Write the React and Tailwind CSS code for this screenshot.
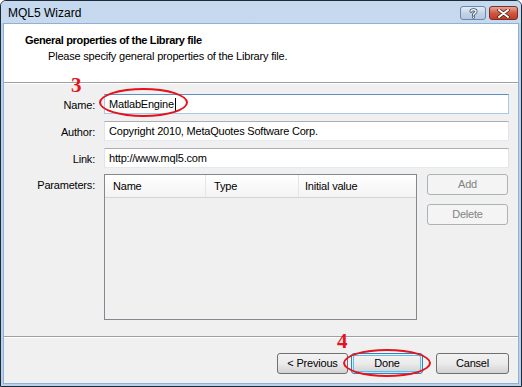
export default function App() {
  const font = { fontFamily: '"Liberation Sans", Arial, sans-serif' };
  return (
    <div className="relative w-[522px] h-[387px] overflow-hidden bg-white tracking-[-0.2px]" style={font}>
      <div className="w-[522px] h-[387px] flex flex-col bg-[#b9d1ea] border border-[#1e2a36] rounded-t-[6px]">
        {/* Title bar */}
        <div className="h-[22px] shrink-0 flex items-center justify-between pl-[7px] pr-[3px] bg-gradient-to-b from-[#c4d8ee] to-[#c6d9ef] rounded-t-[5px]">
          <span className="text-[12px] text-black leading-none pt-[2px] tracking-normal">MQL5 Wizard</span>
          <div className="flex items-start gap-[3px] self-start pt-[5px]">
            <div className="w-[26px] h-[14px] rounded-[3px] border border-[#6d87a7] bg-gradient-to-b from-[#e4edf7] via-[#c3d4e8] to-[#b4c8e0] flex items-center justify-center">
              <svg width="9" height="11" viewBox="0 0 9 11">
                <path d="M2 3.2 C2 1.2 7 1.2 7 3.4 C7 5.2 4.5 5 4.5 7" fill="none" stroke="#3a4d66" strokeWidth="3" strokeLinecap="round" />
                <circle cx="4.5" cy="9.3" r="1.4" fill="#3a4d66" />
                <path d="M2 3.2 C2 1.2 7 1.2 7 3.4 C7 5.2 4.5 5 4.5 7" fill="none" stroke="#ffffff" strokeWidth="1.4" strokeLinecap="round" />
                <circle cx="4.5" cy="9.3" r="0.8" fill="#ffffff" />
              </svg>
            </div>
            <div className="w-[29px] h-[14px] rounded-[3px] border border-[#7a2e24] bg-gradient-to-b from-[#e8a493] via-[#d0583f] to-[#c33c22] flex items-center justify-center">
              <svg width="13" height="9" viewBox="0 0 13 9">
                <path d="M2 1 L11 8 M11 1 L2 8" stroke="#3b1b15" strokeWidth="3.4" strokeLinecap="round" />
                <path d="M2 1 L11 8 M11 1 L2 8" stroke="#ffffff" strokeWidth="2" strokeLinecap="round" />
              </svg>
            </div>
          </div>
        </div>
        {/* Client area */}
        <div className="flex-1 flex flex-col mx-[2px] mb-[2px] border border-[#8fb1d6] bg-[#f0f0f0]">
          {/* Header */}
          <div className="h-[58px] shrink-0 bg-white pt-[10px] pl-[21px] flex flex-col">
            <div className="text-[11px] font-bold text-black leading-[13px] tracking-[-0.35px]">General properties of the Library file</div>
            <div className="text-[11px] text-black leading-[13px] mt-[3px] pl-[23px]">Please specify general properties of the Library file.</div>
          </div>
          <div className="h-px bg-[#a0a0a0] shrink-0" />
          <div className="h-px bg-white shrink-0" />
          {/* Form */}
          <div className="flex-1 flex flex-col pt-[10px] pl-[100px] pr-[9px]">
            <div className="flex flex-col gap-[7px]">
              <Row label="Name:">
                <div className="h-[20px] flex-1 border border-[#a8c8e4] border-t-[#5d8fc0] bg-white flex items-center pl-[4px] text-[11px] text-black">
                  MatlabEngine<span className="w-px h-[13px] bg-black ml-px" />
                </div>
              </Row>
              <Row label="Author:">
                <Input>Copyright 2010, MetaQuotes Software Corp.</Input>
              </Row>
              <Row label="Link:">
                <Input>http://www.mql5.com</Input>
              </Row>
            </div>
            <div className="flex mt-[6px]">
              <div className="w-0 relative">
                <span className="absolute right-[9px] top-[3px] text-[11px] text-black whitespace-nowrap">Parameters:</span>
              </div>
              <div className="w-[313px] h-[146px] border border-[#828790] bg-[#f0f0f0] flex flex-col">
                <div className="h-[23px] flex bg-gradient-to-b from-white to-[#f3f3f3] border-b border-[#d5d5d5] text-[11px] text-black">
                  <div className="w-[101px] border-r border-[#e3e5e7] flex items-center pl-[8px]">Name</div>
                  <div className="w-[93px] border-r border-[#e3e5e7] flex items-center pl-[8px]">Type</div>
                  <div className="flex-1 flex items-center pl-[6px]">Initial value</div>
                </div>
              </div>
              <div className="flex flex-col gap-[9px] ml-[10px]">
                <DisabledButton>Add</DisabledButton>
                <DisabledButton>Delete</DisabledButton>
              </div>
            </div>
          </div>
          <div className="h-px bg-[#a0a0a0] shrink-0" />
          <div className="h-px bg-white shrink-0" />
          <div className="h-[45px] shrink-0 flex items-start justify-end pt-[15px] pr-[9px]">
            <Button className="w-[71px]">&lt; Previous</Button>
            <div className="ml-[3px] w-[72px] h-[21px] rounded-[3px] border border-[#3c7fb1] bg-gradient-to-b from-[#eaf6fd] via-[#d9f0fc] to-[#bee6fd] p-px">
              <div className="w-full h-full rounded-[2px] border border-[#5ac0f0] bg-gradient-to-b from-[#f2f2f2] via-[#ebebeb] to-[#d6d6d6] flex items-center justify-center text-[11px] text-black">Done</div>
            </div>
            <Button className="w-[73px] ml-[13px]">Cansel</Button>
          </div>
        </div>
      </div>
      {/* Annotations */}
      <div className="absolute left-[99px] top-[88px] w-[89px] h-[29px] rounded-[50%] border-2 border-[#e4131d]" />
      <div className="absolute left-[71px] top-[75px] text-[21px] font-bold text-[#e4131d] leading-none" style={{ fontFamily: '"Liberation Serif", serif' }}>3</div>
      <div className="absolute left-[343px] top-[349px] w-[88px] h-[28px] rounded-[50%] border-2 border-[#e4131d]" />
      <div className="absolute left-[337px] top-[331px] text-[21px] font-bold text-[#e4131d] leading-none" style={{ fontFamily: '"Liberation Serif", serif' }}>4</div>
    </div>
  );
}

function Row({ label, children }) {
  return (
    <div className="flex items-center">
      <div className="w-0 relative h-[20px]">
        <span className="absolute right-[9px] top-[3px] text-[11px] text-black whitespace-nowrap">{label}</span>
      </div>
      {children}
    </div>
  );
}

function Input({ children }) {
  return (
    <div className="h-[20px] flex-1 border border-[#e2e3ea] border-t-[#abadb3] border-b-[#e3e9ef] bg-white flex items-center pl-[4px] text-[11px] text-black">
      {children}
    </div>
  );
}

function DisabledButton({ children }) {
  return (
    <div className="w-[81px] h-[21px] rounded-[3px] border border-[#adb2b5] bg-[#f4f4f4] flex items-center justify-center text-[11px] text-[#838383]">
      {children}
    </div>
  );
}

function Button({ children, className = '' }) {
  return (
    <div className={`h-[21px] rounded-[3px] border border-[#707070] bg-gradient-to-b from-[#f2f2f2] via-[#ebebeb] to-[#d2d2d2] flex items-center justify-center text-[11px] text-black ${className}`}>
      {children}
    </div>
  );
}
